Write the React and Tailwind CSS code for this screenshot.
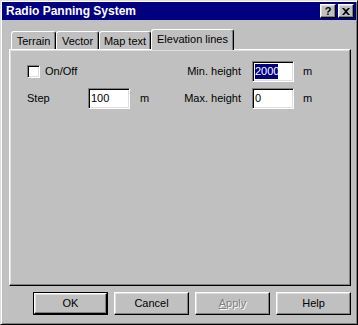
import React from "react";

const raised =
  "border border-t-white border-l-white border-r-black border-b-black shadow-[inset_-1px_-1px_0_#808080,inset_1px_1px_0_#dfdfdf]";
const sunken =
  "border border-t-[#808080] border-l-[#808080] border-r-white border-b-white shadow-[inset_1px_1px_0_black,inset_-1px_-1px_0_#dfdfdf]";

const Tab = ({ label, width, active }) => (
  <div
    className={`flex justify-center border-l border-t border-r border-l-white border-t-white border-r-black rounded-t-[3px] shadow-[inset_-1px_0_0_#808080] bg-[#c0c0c0] ${
      active ? "h-[21px] -mb-[1px] pt-[4px] relative z-10" : "h-[18px] pt-[4px]"
    }`}
    style={{ width }}
  >
    {label}
  </div>
);

const Field = ({ children }) => (
  <div className={`w-[42px] h-[21px] bg-white ${sunken} flex items-center pl-[2px]`}>
    {children}
  </div>
);

const Button = ({ children, isDefault }) => (
  <div
    className={`w-[75px] h-[23px] ${
      isDefault ? "border border-black" : ""
    } flex`}
  >
    <div className={`flex-1 ${raised} flex items-center justify-center`}>
      {children}
    </div>
  </div>
);

const App = () => {
  return (
    <div className="w-[358px] h-[325px] bg-[#c0c0c0] border border-t-[#dfdfdf] border-l-[#dfdfdf] border-r-black border-b-black shadow-[inset_1px_1px_0_white,inset_-1px_-1px_0_#808080] p-[1px] text-[11px] text-black font-['Liberation_Sans',Arial,sans-serif] leading-none">
      {/* title bar */}
      <div className="h-[18px] bg-[#000080] flex items-center pl-[4px] pr-[2px]">
        <span className="text-white font-bold text-[12px] flex-1">
          Radio Panning System
        </span>
        <div className="flex gap-[2px]">
          <div className={`w-[16px] h-[14px] bg-[#c0c0c0] ${raised} flex items-center justify-center font-bold text-[11px]`}>
            ?
          </div>
          <div className={`w-[16px] h-[14px] bg-[#c0c0c0] ${raised} flex items-center justify-center`}>
            <svg width="8" height="7" viewBox="0 0 8 7">
              <path d="M0 0h2l2 2 2-2h2L5 3.5 8 7H6L4 5 2 7H0l3-3.5z" fill="black" />
            </svg>
          </div>
        </div>
      </div>

      <div className="pl-[7px] pr-[5px]">
        {/* tabs */}
        <div className="flex items-end h-[20px] mt-[9px] pl-[2px]">
          <Tab label="Terrain" width={45} />
          <Tab label="Vector" width={43} />
          <Tab label="Map text" width={52} />
          <Tab label="Elevation lines" width={83} active />
        </div>

        {/* panel */}
        <div className="h-[237px] border border-t-white border-l-white border-r-black border-b-black shadow-[inset_-1px_-1px_0_#808080,inset_1px_1px_0_#dfdfdf] pt-[11px] pl-[17px]">
          <div className="flex items-center h-[21px]">
            <div className="w-[103px] flex items-center">
              <div className={`w-[13px] h-[13px] bg-white ${sunken}`} />
              <span className="ml-[5px]">On/Off</span>
            </div>
            <div className="w-[111px] text-right">Min. height</div>
            <div className="ml-[11px]">
              <Field>
                <span className="inline-block w-[23px] h-[15px] overflow-hidden whitespace-nowrap bg-[#000080] text-white leading-[15px]">
                  2000
                </span>
              </Field>
            </div>
            <span className="ml-[9px]">m</span>
          </div>

          <div className="flex items-center h-[21px] mt-[6px]">
            <div className="w-[61px]">Step</div>
            <Field>100</Field>
            <div className="w-[111px] flex justify-between">
              <span className="ml-[10px]">m</span>
              <span>Max. height</span>
            </div>
            <div className="ml-[11px]">
              <Field>0</Field>
            </div>
            <span className="ml-[9px]">m</span>
          </div>
        </div>

        {/* buttons */}
        <div className="flex justify-end gap-[6px] mt-[6px]">
          <Button isDefault>OK</Button>
          <Button>Cancel</Button>
          <Button>
            <span className="text-[#808080] [text-shadow:1px_1px_0_white]">
              <span className="underline">A</span>pply
            </span>
          </Button>
          <Button>Help</Button>
        </div>
      </div>
    </div>
  );
};

export default App;
